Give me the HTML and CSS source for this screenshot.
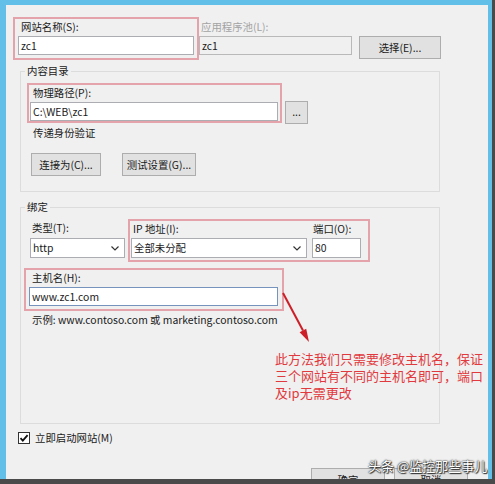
FILE: index.html
```html
<!DOCTYPE html>
<html lang="zh-CN">
<head>
<meta charset="utf-8">
<title>添加网站</title>
<link rel="stylesheet" href="styles.css">
</head>
<body>
<div class="window">
  <div class="row1">
    <div class="hl box1">
      <div class="lbl">网站名称(S):</div>
      <div class="field f-name">zc1</div>
    </div>
    <div class="col-pool">
      <div class="lbl dim">应用程序池(L):</div>
      <div class="field disabled f-pool">zc1</div>
    </div>
    <div class="btn b-select">选择(E)...</div>
  </div>

  <fieldset class="group g1">
    <legend>内容目录</legend>
    <div class="row-path">
      <div class="hl box2">
        <div class="lbl">物理路径(P):</div>
        <div class="field f-path">C:\WEB\zc1</div>
      </div>
      <div class="btn b-browse">...</div>
    </div>
    <div class="lbl pass">传递身份验证</div>
    <div class="btn-row">
      <div class="btn b-conn">连接为(C)...</div>
      <div class="btn b-test">测试设置(G)...</div>
    </div>
  </fieldset>

  <fieldset class="group g2">
    <legend>绑定</legend>
    <div class="row-bind">
      <div class="col-type">
        <div class="lbl">类型(T):</div>
        <div class="field select s-type">http<svg class="chev" width="8" height="5" viewBox="0 0 8 5"><polyline points="0.5,0.5 4,4 7.5,0.5" fill="none" stroke="#333" stroke-width="1.2"/></svg></div>
      </div>
      <div class="hl box3">
        <div class="col-ip">
          <div class="lbl">IP 地址(I):</div>
          <div class="field select s-ip">全部未分配<svg class="chev" width="8" height="5" viewBox="0 0 8 5"><polyline points="0.5,0.5 4,4 7.5,0.5" fill="none" stroke="#333" stroke-width="1.2"/></svg></div>
        </div>
        <div class="col-port">
          <div class="lbl">端口(O):</div>
          <div class="field f-port">80</div>
        </div>
      </div>
    </div>
    <div class="hl box4">
      <div class="lbl">主机名(H):</div>
      <div class="field focus f-host">www.zc1.com</div>
    </div>
    <div class="lbl example">示例: www.contoso.com 或 marketing.contoso.com</div>
  </fieldset>

  <div class="check-row">
    <svg class="cb" width="12" height="12" viewBox="0 0 12 12"><rect x="0.5" y="0.5" width="11" height="11" fill="#fff" stroke="#333"/><path d="M2.5 6.2 L4.8 8.6 L9.6 3.2" fill="none" stroke="#111" stroke-width="1.8"/></svg>
    <span class="lbl">立即启动网站(M)</span>
  </div>

  <div class="footer">
    <div class="btn b-ok">确定</div>
    <div class="btn b-cancel">取消</div>
  </div>

  <svg class="arrow" width="40" height="60" viewBox="0 0 40 60"><line x1="5" y1="5" x2="25" y2="42.5" stroke="#cc1f28" stroke-width="2"/><polygon points="31,54 21.6,44.3 28.2,40.8" fill="#cc1f28"/></svg>
  <div class="note">此方法我们只需要修改主机名，保证<br>三个网站有不同的主机名即可，端口<br>及ip无需更改</div>
  <div class="watermark">头条 @监控那些事儿</div>
</div>
</body>
</html>
```

FILE: styles.css
```css
html, body {
  margin: 0;
  padding: 0;
}
body {
  width: 495px;
  height: 484px;
  background: #4a4a4a;
  overflow: hidden;
  font-family: "Noto Sans CJK SC", "Noto Sans", sans-serif;
  font-size: 10.4px;
  color: #1a1a1a;
}
.window {
  position: relative;
  width: 492px;
  height: 479px;
  box-sizing: border-box;
  border-top: 5px solid #62c0e8;
  border-left: 6px solid #62c0e8;
  border-right: 4px solid #62c0e8;
  background: #f0f0f0;
  overflow: hidden;
}
.lbl {
  line-height: 16px;
  white-space: nowrap;
}
.dim { color: #a3a3a3; }
.hl {
  border: 2px solid #e4a2aa;
  box-sizing: border-box;
}
.field {
  box-sizing: border-box;
  border: 1px solid #abadb3;
  background: #fff;
  padding: 0 0 0 2px;
  line-height: 17px;
  white-space: nowrap;
  position: relative;
}
.field.disabled {
  background: #f0f0f0;
  border-color: #b9b9b9;
}
.field.focus { border-color: #7593bd; }
.select { line-height: 18px; }
.chev {
  position: absolute;
  right: 5px;
  top: 7px;
}
.btn {
  box-sizing: border-box;
  height: 23px;
  border: 1px solid #adadad;
  background: #e1e1e1;
  text-align: center;
  line-height: 21px;
  white-space: nowrap;
}

/* row 1 */
.row1 {
  display: flex;
  align-items: flex-start;
  margin: 12px 0 0 7px;
}
.box1 {
  width: 186px;
  height: 43px;
}
.box1 .lbl { padding-left: 6px; }
.f-name {
  width: 176px;
  height: 19px;
  margin: 1px 0 0 3px;
}
.col-pool { margin-top: 2px; }
.col-pool .lbl { padding-left: 2px; }
.f-pool {
  width: 153px;
  height: 19px;
  margin-top: 1px;
}
.b-select {
  width: 82px;
  margin: 19px 0 0 7px;
}

/* groups */
.group {
  box-sizing: border-box;
  width: 420px;
  margin: 0 0 0 14px;
  padding: 0;
  border: 1px solid #dcdcdc;
  min-width: 0;
}
.group legend {
  margin-left: 4px;
  padding: 0 2px;
  line-height: 16px;
}
.g1 {
  margin-top: 3px;
  padding-bottom: 15px;
}
.row-path {
  display: flex;
  align-items: flex-start;
  margin: 4px 0 0 6px;
}
.box2 {
  width: 255px;
  height: 40px;
}
.box2 .lbl { padding-left: 4px; }
.f-path {
  width: 248px;
  height: 19px;
  margin: 1px 0 0 1px;
}
.b-browse {
  width: 23px;
  margin: 18px 0 0 3px;
  line-height: 19px;
}
.pass {
  margin: 1px 0 0 12px;
}
.btn-row {
  display: flex;
  gap: 21px;
  margin: 12px 0 0 10px;
}
.b-conn { width: 70px; }
.b-test { width: 74px; }

.g2 {
  margin-top: 7px;
  height: 225px;
}
.row-bind {
  display: flex;
  align-items: flex-start;
}
.col-type { margin: 5px 0 0 9px; }
.col-type .lbl { padding-left: 2px; }
.s-type {
  width: 95px;
  height: 20px;
  margin-top: 2px;
}
.box3 {
  display: flex;
  width: 242px;
  height: 43px;
  margin: 4px 0 0 3px;
}
.col-ip { margin-left: 1px; }
.col-ip .lbl { padding-left: 2px; }
.s-ip {
  width: 176px;
  height: 20px;
  margin-top: 1px;
}
.col-port { margin-left: 5px; }
.col-port .lbl { padding-left: 1px; }
.f-port {
  width: 49px;
  height: 20px;
  margin-top: 1px;
  line-height: 18px;
}
.box4 {
  width: 260px;
  height: 43px;
  margin: 6px 0 0 3px;
}
.box4 .lbl { padding-left: 6px; }
.f-host {
  width: 249px;
  height: 19px;
  margin: 1px 0 0 3px;
}
.example { margin: 1px 0 0 11px; }

.check-row {
  display: flex;
  align-items: center;
  gap: 5px;
  margin: 6px 0 0 12px;
}
.cb { display: block; }

.footer {
  display: flex;
  justify-content: flex-end;
  gap: 9px;
  margin-top: 22px;
  padding-right: 20px;
}
.b-ok, .b-cancel { width: 74px; }

/* annotations over the dialog */
.arrow {
  position: absolute;
  left: 272px;
  top: 283px;
}
.note {
  position: absolute;
  left: 269px;
  top: 345px;
  font-size: 13px;
  line-height: 17px;
  color: #e03a3e;
  white-space: nowrap;
}
.watermark {
  position: absolute;
  left: 362px;
  top: 452px;
  font-size: 13px;
  line-height: 18px;
  color: #fff;
  white-space: nowrap;
  text-shadow: 0 0 2px #222, 0 0 1px #222, 1px 1px 1px #333;
}
```
